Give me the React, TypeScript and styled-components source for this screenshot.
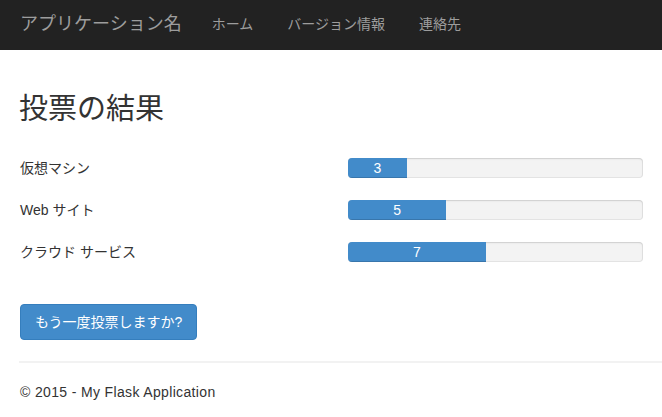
import React from "react";
import styled, { createGlobalStyle } from "styled-components";

const GlobalStyle = createGlobalStyle`
  html, body {
    margin: 0;
    padding: 0;
    background: #fff;
  }
  body {
    font-family: "Liberation Sans", Arial, "Noto Sans CJK JP", sans-serif;
    font-size: 14px;
    line-height: 20px;
    color: #333;
  }
  * { box-sizing: border-box; }
`;

const Navbar = styled.nav`
  height: 50px;
  background: #222;
  display: flex;
  align-items: center;
  padding: 0 0 3px 20px;
`;

const Brand = styled.a`
  font-size: 18px;
  line-height: 20px;
  color: #9d9d9d;
  margin-right: 30px;
  text-decoration: none;
`;

const NavLink = styled.a`
  font-size: 14px;
  line-height: 20px;
  color: #9d9d9d;
  margin-right: 34px;
  text-decoration: none;
`;

const Main = styled.main`
  padding: 0 19px 0 19px;
`;

const Title = styled.h2`
  margin: 43px 0 0 0;
  font-size: 29px;
  line-height: 32px;
  font-weight: 400;
  color: #333;
`;

const Results = styled.div`
  margin-top: 33px;
  display: flex;
  flex-direction: column;
  gap: 22px;
`;

const ResultRow = styled.div`
  display: grid;
  grid-template-columns: 1fr 295px;
  align-items: center;
  height: 20px;
`;

const Label = styled.span`
  font-size: 14px;
  color: #333;
  padding-left: 1px;
`;

const Progress = styled.div`
  height: 20px;
  background: #f3f3f3;
  border-radius: 4px;
  overflow: hidden;
  box-shadow: inset 0 1px 2px rgba(0, 0, 0, 0.1), inset 0 0 0 1px rgba(0, 0, 0, 0.06);
  display: flex;
`;

const Bar = styled.div`
  height: 100%;
  background: #428bca;
  color: #fff;
  font-size: 14px;
  line-height: 20px;
  text-align: center;
  box-shadow: inset 0 -1px 0 rgba(0, 0, 0, 0.15);
`;

const Button = styled.button`
  margin-top: 42px;
  height: 36px;
  padding: 0 14px;
  background: #428bca;
  border: 1px solid #357ebd;
  border-radius: 4px;
  color: #fff;
  font-family: "Liberation Sans", Arial, "Noto Sans CJK JP", sans-serif;
  font-size: 14px;
  line-height: 34px;
  cursor: pointer;
  margin-left: 1px;
`;

const Divider = styled.hr`
  margin: 21px 0 0 19px;
  border: 0;
  border-top: 2px solid #f2f2f2;
  height: 0;
`;

const Footer = styled.footer`
  padding: 19px 19px 21px 20px;
  font-size: 14px;
  line-height: 20px;
  letter-spacing: 0.35px;
  color: #333;
`;

const votes = [
  { label: "仮想マシン", count: 3 },
  { label: "Web サイト", count: 5 },
  { label: "クラウド サービス", count: 7 },
];

export default function App() {
  const total = votes.reduce((s, v) => s + v.count, 0);
  return (
    <>
      <GlobalStyle />
      <Navbar>
        <Brand href="#">アプリケーション名</Brand>
        <NavLink href="#">ホーム</NavLink>
        <NavLink href="#">バージョン情報</NavLink>
        <NavLink href="#">連絡先</NavLink>
      </Navbar>
      <Main>
        <Title>投票の結果</Title>
        <Results>
          {votes.map((v) => (
            <ResultRow key={v.label}>
              <Label>{v.label}</Label>
              <Progress>
                <Bar style={{ width: `${(v.count / total) * 100}%` }}>{v.count}</Bar>
              </Progress>
            </ResultRow>
          ))}
        </Results>
        <Button>もう一度投票しますか?</Button>
      </Main>
      <Divider />
      <Footer>© 2015 - My Flask Application</Footer>
    </>
  );
}
